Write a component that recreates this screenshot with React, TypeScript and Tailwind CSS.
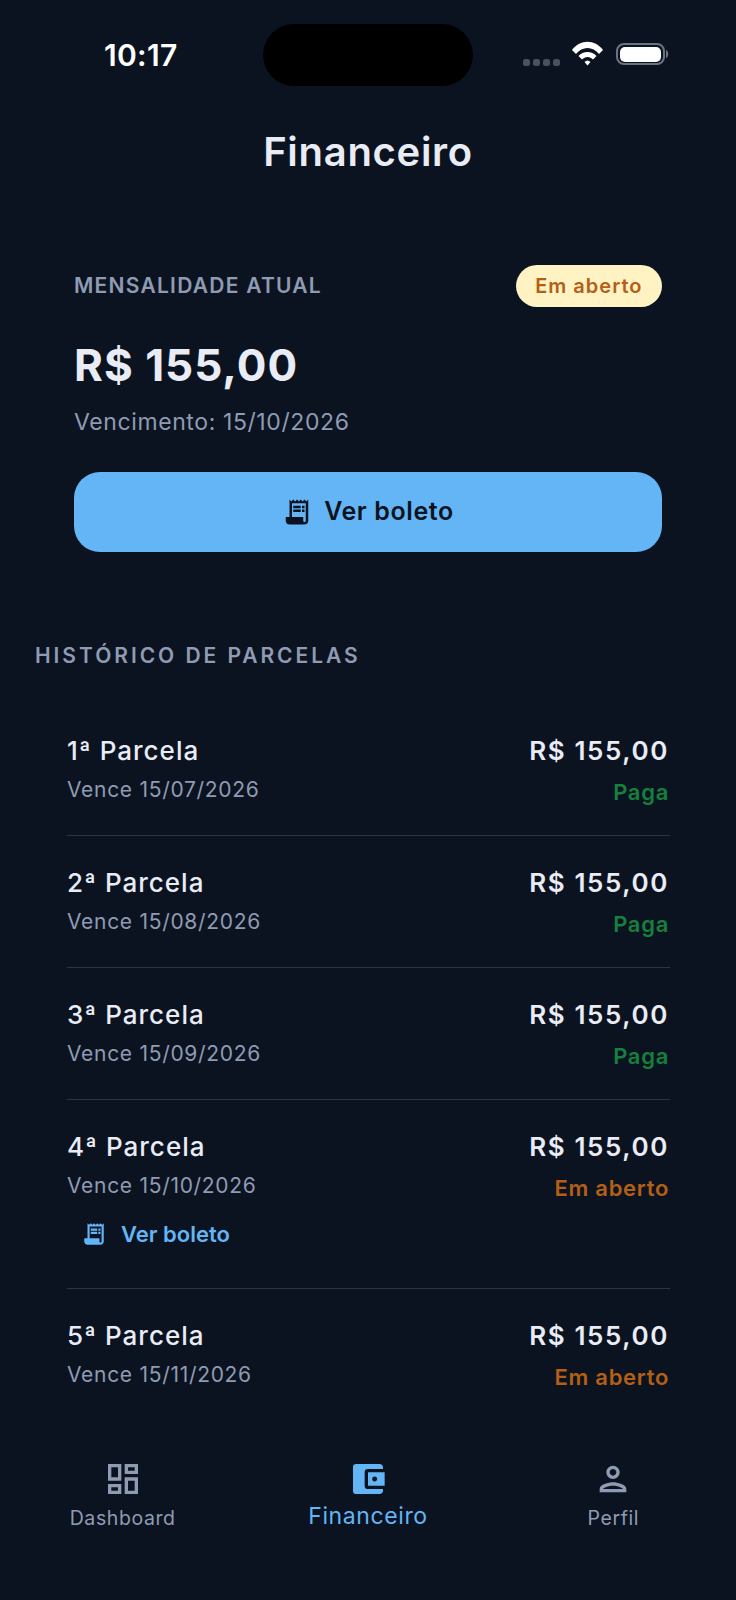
import { MdReceiptLong, MdOutlineDashboard, MdAccountBalanceWallet, MdOutlinePerson } from "react-icons/md";

const rows = [
  { n: "1ª Parcela", d: "Vence 15/07/2026", s: "Paga" },
  { n: "2ª Parcela", d: "Vence 15/08/2026", s: "Paga" },
  { n: "3ª Parcela", d: "Vence 15/09/2026", s: "Paga" },
  { n: "4ª Parcela", d: "Vence 15/10/2026", s: "Em aberto", link: true },
  { n: "5ª Parcela", d: "Vence 15/11/2026", s: "Em aberto", last: true },
];

export default function App() {
  return (
    <div className="w-[736px] h-[1600px] overflow-hidden bg-[#0b1320] flex flex-col font-['Inter',sans-serif]">
      <div className="h-[85px] pt-[24px] pl-[104px] pr-[68px] flex items-start shrink-0">
        <div className="w-[159px] h-[62px] flex items-center text-[30px] font-semibold tracking-[0.3px] text-white leading-none">10:17</div>
        <div className="w-[210px] h-[62px] rounded-full bg-black" />
        <div className="flex-1 h-[62px] flex items-start justify-end relative">
          <svg width="146" height="62" viewBox="0 0 146 62" className="shrink-0 mr-[-1px]">
            <g fill="#4a5261">
              <rect x="0" y="35" width="7" height="7" rx="2.5" />
              <rect x="10" y="35" width="7" height="7" rx="2.5" />
              <rect x="20" y="35" width="7" height="7" rx="2.5" />
              <rect x="30" y="35" width="7" height="7" rx="2.5" />
            </g>
            <path d="M49 26 C57 15 72 15 80 26 L76 30 C70 22 59 22 53 30 Z" fill="#fff" />
            <path d="M55.5 32 C60 26.5 69 26.5 73.5 32 L70 35.5 C67 32 62 32 59 35.5 Z" fill="#fff" />
            <path d="M61.5 38 C63.5 36 65.5 36 67.5 38 L64.5 41.5 Z" fill="#fff" />
            <rect x="94" y="20" width="47" height="20" rx="7" fill="none" stroke="#6b7280" strokeWidth="2" />
            <rect x="97" y="23" width="41" height="15" rx="5" fill="#fff" />
            <path d="M143 26 C146 27 146 33 143 34 Z" fill="#6b7280" />
          </svg>
        </div>
      </div>

      <h1 className="mt-[43px] text-center text-[40px] leading-[48px] font-semibold tracking-[0.7px] text-[#e9ecf5]">Financeiro</h1>

      <section className="mt-[89px] px-[74px] shrink-0">
        <div className="flex items-center justify-between h-[42px]">
          <span className="text-[21px] font-semibold tracking-[1.25px] text-[#8f9bb3]">MENSALIDADE ATUAL</span>
          <span className="h-[42px] -mt-[1px] px-[19.5px] rounded-full bg-[#fff3c4] text-[#b45f16] text-[20px] font-semibold tracking-[1px] flex items-center">Em aberto</span>
        </div>
        <div className="mt-[31px] text-[44px] leading-[54px] font-bold tracking-[1px] text-[#e9ecf5]">R$ 155,00</div>
        <div className="mt-[15px] text-[23px] leading-[30px] tracking-[0.6px] text-[#8f9bb3]">Vencimento: 15/10/2026</div>
        <button className="mt-[35px] w-full h-[80px] rounded-[26px] bg-[#64b5f6] flex items-center justify-center gap-[12px] text-[#0b1320] text-[25px] font-semibold tracking-[0.6px]">
          <MdReceiptLong className="w-[30px] h-[30px]" />
          Ver boleto
        </button>
      </section>

      <h2 className="mt-[91px] pl-[35px] text-[21px] leading-[26px] font-semibold tracking-[2.95px] text-[#8f9bb3]">HISTÓRICO DE PARCELAS</h2>

      <div className="mt-[35px] pl-[67px] pr-[66px] shrink-0">
        {rows.map((r) => (
          <div key={r.n} className={r.last ? "pt-[31px]" : "pt-[31px] pb-[29px] border-b border-[#2a3446]"}>
            <div className="flex justify-between items-start">
              <div>
                <div className="text-[26px] leading-[32px] font-medium tracking-[1px] text-[#e9ecf5]">{r.n}</div>
                <div className="mt-[9px] text-[21px] leading-[28px] tracking-[0.7px] text-[#8f9bb3]">{r.d}</div>
              </div>
              <div className="text-right mr-[1px]">
                <div className="text-[26px] leading-[32px] font-semibold tracking-[1.6px] text-[#e9ecf5]">R$ 155,00</div>
                <div className={"mt-[11px] text-[22px] leading-[28px] font-semibold tracking-[0.7px] " + (r.s === "Paga" ? "text-[#15803d]" : "text-[#b45f16]")}>{r.s}</div>
              </div>
            </div>
            {r.link && (
              <div className="mt-[16px] mb-[9px] ml-[14px] flex items-center gap-[14px] text-[#64b5f6] text-[22px] leading-[32px] font-semibold">
                <MdReceiptLong className="w-[26px] h-[26px]" />
                Ver boleto
              </div>
            )}
          </div>
        ))}
      </div>

      <nav className="mt-auto mb-[68px] grid grid-cols-3 shrink-0">
        <div className="flex flex-col items-center text-[#8f9bb3]">
          <MdOutlineDashboard className="w-[40px] h-[40px]" />
          <span className="mt-[5px] text-[19.5px] leading-[28px] tracking-[0.6px]">Dashboard</span>
        </div>
        <div className="flex flex-col items-center text-[#64b5f6]">
          <MdAccountBalanceWallet className="w-[40px] h-[40px]" />
          <span className="mt-[2px] text-[23px] leading-[30px] tracking-[0.6px]">Financeiro</span>
        </div>
        <div className="flex flex-col items-center text-[#8f9bb3]">
          <MdOutlinePerson className="w-[40px] h-[40px]" />
          <span className="mt-[5px] text-[19.5px] leading-[28px] tracking-[0.6px]">Perfil</span>
        </div>
      </nav>
    </div>
  );
}
